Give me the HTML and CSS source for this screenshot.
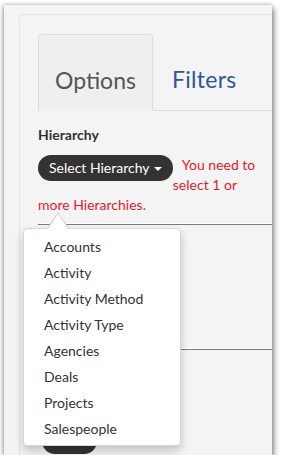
FILE: index.html
```html
<!DOCTYPE html>
<html lang="en">
<head>
    <meta charset="UTF-8">
    <meta name="viewport" content="width=device-width, initial-scale=1.0">
    <title>Report Options</title>
    <link rel="stylesheet" href="styles.css">
</head>
<body>
    <div class="frame">
        <div class="panel">
            <div class="tabs">
                <div class="tab active">Options</div>
                <div class="tab">Filters</div>
            </div>
            <div class="tab-body">
                <div class="field-label">Hierarchy</div>
                <div class="field-row">
                    <button class="select-btn">Select Hierarchy <span class="caret"></span></button>
                    <span class="error-text">You need to select 1 or more Hierarchies.</span>
                </div>
                <div class="divider"></div>
                <div class="divider second"></div>
                <div class="apply-btn"></div>

                <ul class="dropdown-menu">
                    <li>Accounts</li>
                    <li>Activity</li>
                    <li>Activity Method</li>
                    <li>Activity Type</li>
                    <li>Agencies</li>
                    <li>Deals</li>
                    <li>Projects</li>
                    <li>Salespeople</li>
                </ul>
            </div>
        </div>
    </div>
</body>
</html>
```

FILE: styles.css
```css
body {
    font-family: 'Lato', 'Liberation Sans', sans-serif;
    margin: 0;
    padding: 0;
    background-color: #fff;
    color: #333;
}
.frame {
    width: 268px;
    height: 450px;
    margin: 5px 0 0 4px;
    padding: 9px 0 0 15px;
    box-sizing: border-box;
    background-color: #f4f4f4;
    box-shadow: 2px 3px 6px rgba(0, 0, 0, 0.45), -1px 0 4px rgba(0, 0, 0, 0.3);
    overflow: hidden;
    position: relative;
}
.panel {
    width: 300px;
    height: 480px;
    padding: 19px 0 0 18px;
    box-sizing: border-box;
    border: 1px solid #e3e3e3;
    border-radius: 4px;
}
.tabs {
    display: flex;
    border-bottom: 1px solid #dedede;
    height: 76px;
}
.tab {
    padding: 30px 16px 0 19px;
    font-size: 23px;
    color: #2d5795;
    line-height: 30px;
    letter-spacing: 0.3px;
}
.tab.active {
    width: 115px;
    box-sizing: border-box;
    height: 77px;
    padding-left: 16px;
    letter-spacing: 0;
    color: #555;
    background-color: #efefef;
    border: 1px solid #dedede;
    border-bottom-color: #efefef;
    border-radius: 4px 4px 0 0;
}
.tab-body {
    position: relative;
    width: 234px;
    padding-top: 15px;
}
.field-label {
    font-size: 14px;
    font-weight: bold;
    line-height: 18px;
    color: #333;
}
.field-row {
    margin: 11px 14px 0 0;
    line-height: 20px;
    font-size: 14px;
}
.select-btn {
    float: left;
    height: 26px;
    padding: 0 11px;
    border: none;
    border-radius: 13px;
    background-color: #333;
    color: #fff;
    font-family: 'Lato', 'Liberation Sans', sans-serif;
    font-size: 14px;
    line-height: 26px;
}
.caret {
    display: inline-block;
    width: 0;
    height: 0;
    margin-left: 1px;
    vertical-align: middle;
    border-top: 4px solid #fff;
    border-left: 4px solid transparent;
    border-right: 4px solid transparent;
}
.error-text {
    color: #e8192c;
    margin-left: 9px;
}
.divider {
    clear: both;
    margin-top: 8px;
    height: 1px;
    background-color: #6f7d90;
    border-top: 1px solid #fff;
}
.divider.second {
    margin-top: 123px;
}
.apply-btn {
    margin: 78px 0 0 4px;
    width: 55px;
    height: 26px;
    border-radius: 13px;
    background-color: #333;
}
.dropdown-menu {
    position: absolute;
    left: -15px;
    top: 117px;
    width: 158px;
    height: 218px;
    box-sizing: border-box;
    margin: 0;
    padding: 5px 0 0;
    list-style: none;
    background-color: #fff;
    border: 1px solid #d6d6d6;
    border-radius: 4px;
    box-shadow: 0 5px 10px rgba(0, 0, 0, 0.2);
}
.dropdown-menu::before {
    content: "";
    position: absolute;
    left: 23px;
    top: -17px;
    border-left: 11px solid transparent;
    border-right: 11px solid transparent;
    border-bottom: 16px solid #d6d6d6;
}
.dropdown-menu::after {
    content: "";
    position: absolute;
    left: 24px;
    top: -15px;
    border-left: 10px solid transparent;
    border-right: 10px solid transparent;
    border-bottom: 15px solid #fff;
}
.dropdown-menu li {
    padding: 0 20px;
    font-size: 14px;
    line-height: 26px;
    color: #333;
}
```
